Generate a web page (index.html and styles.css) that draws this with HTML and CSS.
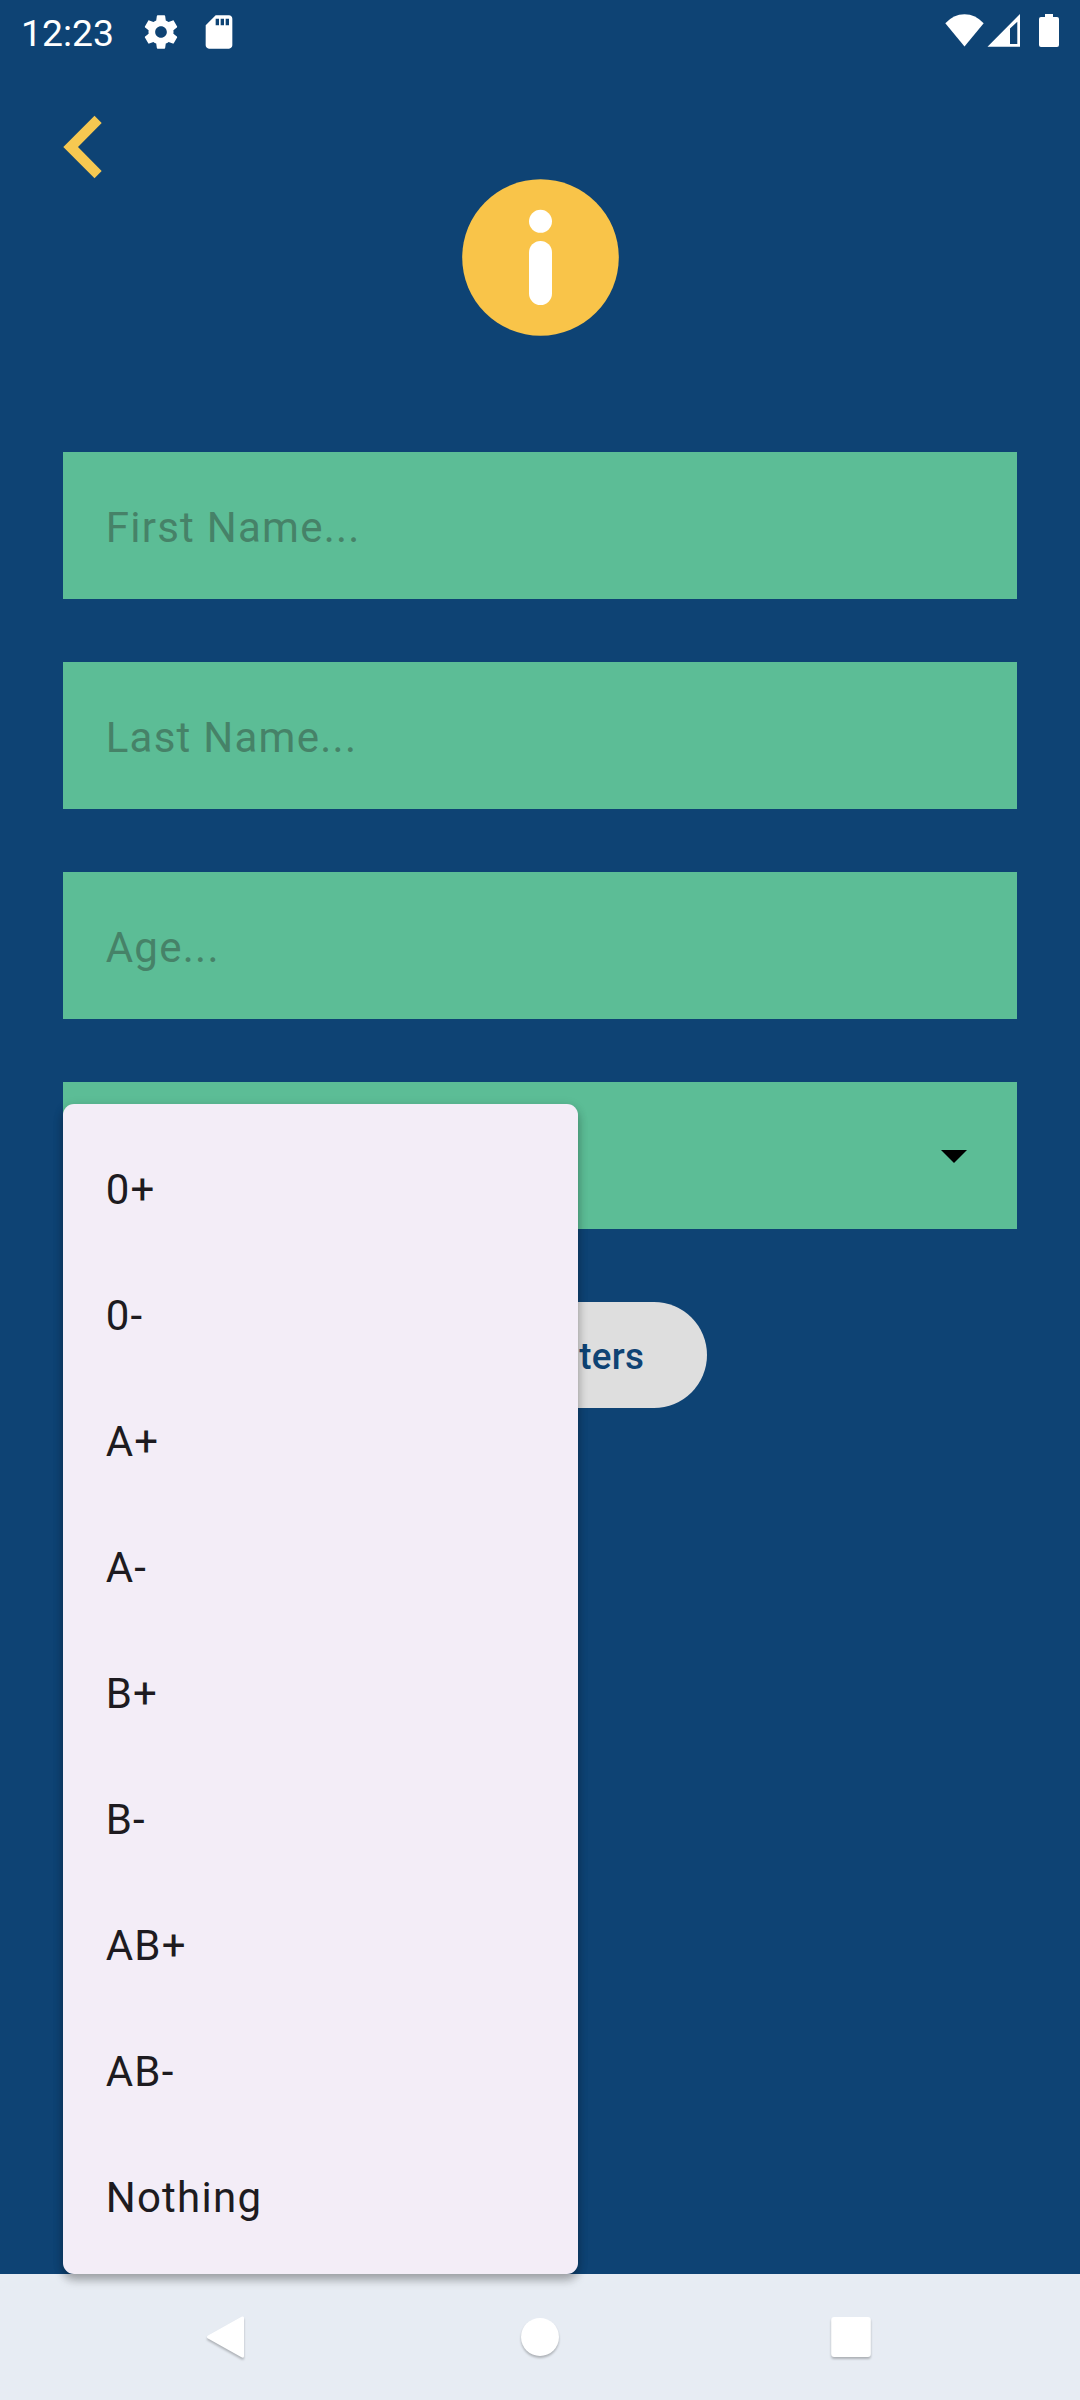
FILE: index.html
```html
<!DOCTYPE html>
<html lang="en">
<head>
<meta charset="utf-8">
<title>Filters</title>
<link rel="stylesheet" href="styles.css">
</head>
<body>
<div class="screen">
  <header class="status">
    <div class="status-left">
      <span class="clock">12:23</span>
      <svg class="status-gear" viewBox="0 0 24 24"><path d="M19.43 12.98c.04-.32.07-.64.07-.98s-.03-.66-.07-.98l2.11-1.65c.19-.15.24-.42.12-.64l-2-3.46c-.12-.22-.39-.3-.61-.22l-2.49 1c-.52-.4-1.08-.73-1.69-.98l-.38-2.65C14.46 2.18 14.25 2 14 2h-4c-.25 0-.46.18-.49.42l-.38 2.65c-.61.25-1.17.59-1.69.98l-2.49-1c-.23-.09-.49 0-.61.22l-2 3.46c-.13.22-.07.49.12.64l2.11 1.65c-.04.32-.07.65-.07.98s.03.66.07.98l-2.11 1.65c-.19.15-.24.42-.12.64l2 3.46c.12.22.39.3.61.22l2.49-1c.52.4 1.08.73 1.69.98l.38 2.65c.03.24.24.42.49.42h4c.25 0 .46-.18.49-.42l.38-2.65c.61-.25 1.17-.59 1.69-.98l2.49 1c.23.09.49 0 .61-.22l2-3.46c.12-.22.07-.49-.12-.64l-2.11-1.65zM12 15.5c-1.93 0-3.5-1.57-3.5-3.5s1.57-3.5 3.5-3.5 3.5 1.57 3.5 3.5-1.57 3.5-3.5 3.5z"/></svg>
      <svg class="status-card" viewBox="0 0 24 24"><path d="M18 2h-8L4.02 8 4 20c0 1.1.9 2 2 2h12c1.1 0 2-.9 2-2V4c0-1.1-.9-2-2-2zm-6 6h-2V4h2v4zm3 0h-2V4h2v4zm3 0h-2V4h2v4z"/></svg>
    </div>
    <svg class="status-right" viewBox="0 0 116 36">
      <path d="M0.3 10.300Q8.500 1.200 19.500 1.200T38.700 10.300L19.500 33.500Z"/>
      <path fill-rule="evenodd" d="M42.500 33.700L75 1V33.700ZM65 15.500V31H72.300V8.800Z"/>
      <path d="M100 1h8v3h4q2 0 2 2v26q0 2-2 2H96q-2 0-2-2V6q0-2 2-2h4z"/>
    </svg>
  </header>

  <main class="content">
    <svg class="back" viewBox="0 0 39 64"><path d="M31.500 .7L38.700 8 15 32 38.700 56 31.500 63.300 .3 32Z"/></svg>
    <svg class="info" viewBox="0 0 157 157">
      <circle class="info-disc" cx="78.500" cy="78.500" r="78.300"/>
      <circle class="info-mark" cx="78.500" cy="42.300" r="11.500"/>
      <rect class="info-mark" x="67" y="62" width="23" height="64" rx="11.500"/>
    </svg>
    <form class="form">
      <div class="field">First Name...</div>
      <div class="field">Last Name...</div>
      <div class="field">Age...</div>
      <div class="field field-select">
        <svg class="caret" viewBox="0 0 26 13"><path d="M0 0H26L13 13Z"/></svg>
        <ul class="menu">
          <li>0+</li>
          <li>0-</li>
          <li>A+</li>
          <li>A-</li>
          <li>B+</li>
          <li>B-</li>
          <li>AB+</li>
          <li>AB-</li>
          <li>Nothing</li>
        </ul>
      </div>
      <button class="apply" type="button">Apply Filters</button>
    </form>
  </main>

  <nav class="navbar">
    <svg viewBox="0 0 60 60"><path d="M46.500 9.800Q49 8.600 49 11V49Q49 51.600 46.500 50.200L13 31.500Q10.800 30 13 28.500Z"/></svg>
    <svg viewBox="0 0 60 60"><circle cx="32" cy="30" r="19"/></svg>
    <svg viewBox="0 0 60 60"><rect x="10.200" y="10" width="39.600" height="40" rx="3"/></svg>
  </nav>
</div>
</body>
</html>
```

FILE: styles.css
```css
* {
  box-sizing: border-box;
}

body {
  margin: 0;
  background: #0e4374;
  font-family: Roboto, "Liberation Sans", sans-serif;
}

.screen {
  display: flex;
  flex-direction: column;
  width: 1080px;
  height: 2400px;
  overflow: hidden;
  background: #0e4374;
}

.status {
  display: flex;
  justify-content: space-between;
  height: 63px;
  padding: 12px 19px 0 21px;
  fill: #fff;
}

.status-left {
  display: flex;
}

.clock {
  width: 120px;
  color: #fff;
  font-size: 37.3px;
  line-height: 42px;
}

.status-gear,
.status-card {
  width: 40px;
  height: 40px;
}

.status-card {
  margin-left: 18px;
}

.status-right {
  width: 116px;
  height: 36px;
  margin-top: 1px;
}

.content {
  display: flex;
  flex: 1;
  flex-direction: column;
  padding: 52px 63px 0;
}

.back {
  width: 39px;
  height: 64px;
  fill: #f6c851;
}

.info {
  align-self: center;
  width: 157px;
  height: 157px;
  margin-left: 1px;
}

.info-disc {
  fill: #f9c449;
}

.info-mark {
  fill: #fff;
}

.form {
  display: flex;
  flex-direction: column;
  gap: 63px;
  margin-top: 116px;
}

.field {
  display: flex;
  align-items: center;
  height: 147px;
  padding: 4px 42px 0 42.7px;
  background: #5cbd96;
  color: #468268;
  font-size: 42px;
  letter-spacing: 1.26px;
}

.field-select {
  position: relative;
  justify-content: flex-end;
  padding: 0 50px 0 0;
}

.caret {
  width: 26px;
  height: 13px;
  margin-top: 2px;
}

.menu {
  position: absolute;
  z-index: 1;
  top: 22px;
  left: 0;
  width: 515px;
  height: 1170px;
  margin: 0;
  padding: 18px 0;
  border-radius: 11px;
  background: #f3edf7;
  box-shadow: 0 6px 10px rgba(0, 0, 0, .28), 0 2px 12px rgba(0, 0, 0, .1);
  color: #1d1b20;
  list-style: none;
}

.menu li {
  height: 126px;
  padding: 5px 42px 0 42.7px;
  line-height: 126px;
}

.apply {
  align-self: center;
  width: 334px;
  height: 106px;
  margin-top: 10px;
  padding: 2px 0 0;
  border: 0;
  border-radius: 53px;
  background: #dedede;
  color: #0e4374;
  font: 500 36.75px Roboto, "Liberation Sans", sans-serif;
  letter-spacing: .3px;
}

.navbar {
  display: flex;
  justify-content: space-between;
  height: 126px;
  padding: 33px 199px 0 195px;
  background: #e7ecf3;
}

.navbar svg {
  width: 60px;
  height: 60px;
  fill: #fff;
  filter: drop-shadow(0 2px 1px rgba(0, 0, 0, .25));
}
```
